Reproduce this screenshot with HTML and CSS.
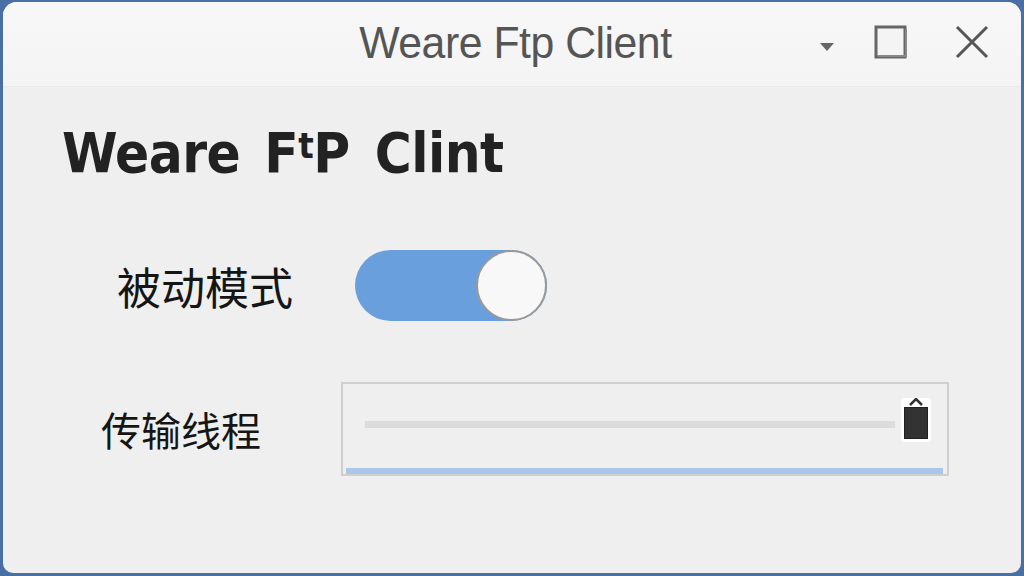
FILE: index.html
```html
<!DOCTYPE html>
<html lang="zh">
<head>
<meta charset="utf-8">
<title>Weare Ftp Client</title>
<link rel="stylesheet" href="styles.css">
</head>
<body>
<div class="window">
  <div class="titlebar">
    <div class="tb-side"></div>
    <div class="tb-title"><span class="tb-text">Weare Ftp Client</span></div>
    <div class="tb-controls">
      <svg class="ctl-arrow" width="16" height="10" viewBox="0 0 16 10"><path d="M1 1 L15 1 L8 9 Z" fill="#666"/></svg>
      <svg class="ctl-max" width="34" height="34" viewBox="0 0 34 34"><rect x="2" y="2" width="29" height="30" fill="#f4f4f4" stroke="#666" stroke-width="3"/><path d="M4 31 L32 31 L32 4" fill="none" stroke="#888" stroke-width="2"/></svg>
      <svg class="ctl-close" width="36" height="34" viewBox="0 0 36 34"><path d="M3 2 L33 32 M33 2 L3 32" stroke="#555" stroke-width="3" fill="none"/></svg>
    </div>
  </div>
  <div class="content">
    <h1 class="heading">Weare<span class="gap"></span>F<span class="sup">t</span>P Clint</h1>
    <div class="row row-toggle">
      <span class="label label-1">被动模式</span>
      <div class="toggle on"><div class="knob"></div></div>
    </div>
    <div class="row row-slider">
      <span class="label label-2">传输线程</span>
      <div class="slider-box">
        <div class="track"></div>
        <div class="thumb-wrap">
          <svg class="caret" width="16" height="8" viewBox="0 0 16 8"><path d="M2 7 L8 1 L14 7" fill="none" stroke="#333" stroke-width="2.5"/></svg>
          <div class="thumb"></div>
        </div>
        <div class="underline"></div>
      </div>
    </div>
  </div>
</div>
</body>
</html>
```
FILE: styles.css
```css
html, body {
  margin: 0;
  padding: 0;
}
body {
  width: 1024px;
  height: 576px;
  background: #4a6fa5;
  overflow: hidden;
}
.window {
  margin: 2px 3px;
  height: 571px;
  background: #efefef;
  border-radius: 14px 14px 10px 10px;
  overflow: hidden;
  display: flex;
  flex-direction: column;
}
.titlebar {
  height: 84px;
  flex: none;
  background: linear-gradient(#f7f7f7, #f4f4f4);
  border-bottom: 1px solid #ebebeb;
  display: grid;
  grid-template-columns: 1fr auto 1fr;
  align-items: center;
}
.tb-title {
  font-family: "Liberation Sans", sans-serif;
  font-size: 45px;
  color: #555;
  padding-left: 6px;
  padding-bottom: 2px;
  width: 310px;
  display: flex;
  justify-content: center;
}
.tb-text {
  display: inline-block;
  white-space: nowrap;
  transform: scaleX(0.95);
  letter-spacing: -0.5px;
}
.tb-controls {
  display: flex;
  justify-content: flex-end;
  align-items: center;
  padding-right: 31px;
  padding-bottom: 4px;
}
.ctl-arrow {
  margin-right: 39px;
  margin-top: 10px;
}
.ctl-max {
  margin-right: 46px;
}
.content {
  flex: 1;
  padding-left: 59px;
  padding-top: 24px;
}
.heading {
  margin: 0;
  font-family: "DejaVu Sans", sans-serif;
  font-stretch: condensed;
  font-weight: bold;
  font-size: 56px;
  line-height: 70px;
  color: #222;
  letter-spacing: -0.5px;
  word-spacing: 8px;
}
.gap {
  display: inline-block;
  width: 24px;
}
.sup {
  font-size: 36px;
  vertical-align: 14px;
}
.row {
  display: flex;
  align-items: center;
}
.label {
  font-family: "Noto Sans CJK SC", sans-serif;
  color: #151515;
}
.row-toggle {
  margin-top: 62px;
  padding-left: 55px;
}
.label-1 {
  font-size: 44px;
  margin-right: 62px;
}
.toggle {
  width: 192px;
  height: 71px;
  border-radius: 36px;
  background: #6a9fdd;
  display: flex;
  justify-content: flex-end;
}
.knob {
  width: 67px;
  height: 67px;
  margin: 0;
  border-radius: 50%;
  background: #f8f8f8;
  border: 2px solid #999;
}
.row-slider {
  margin-top: 61px;
  padding-left: 39px;
}
.label-2 {
  font-size: 40px;
  margin-right: 82px;
}
.slider-box {
  width: 582px;
  height: 90px;
  border: 2px solid #cfcfcf;
  position: relative;
  display: flex;
  align-items: center;
  padding-left: 22px;
  margin-left: -2px;
  box-sizing: content-box;
}
.track {
  width: 530px;
  height: 7px;
  background: #dcdcdc;
  margin-bottom: 10px;
}
.thumb-wrap {
  display: flex;
  flex-direction: column;
  align-items: center;
  margin-left: 6px;
  margin-bottom: 18px;
  background: #fff;
  padding: 0 3px 3px;
  border-radius: 3px;
}
.caret {
  display: block;
  margin-bottom: 1px;
}
.thumb {
  width: 22px;
  height: 30px;
  background: #333;
  border: 1px solid #222;
}
.underline {
  position: absolute;
  left: 3px;
  right: 4px;
  bottom: 0;
  height: 6px;
  background: #a9c7e8;
}
```
